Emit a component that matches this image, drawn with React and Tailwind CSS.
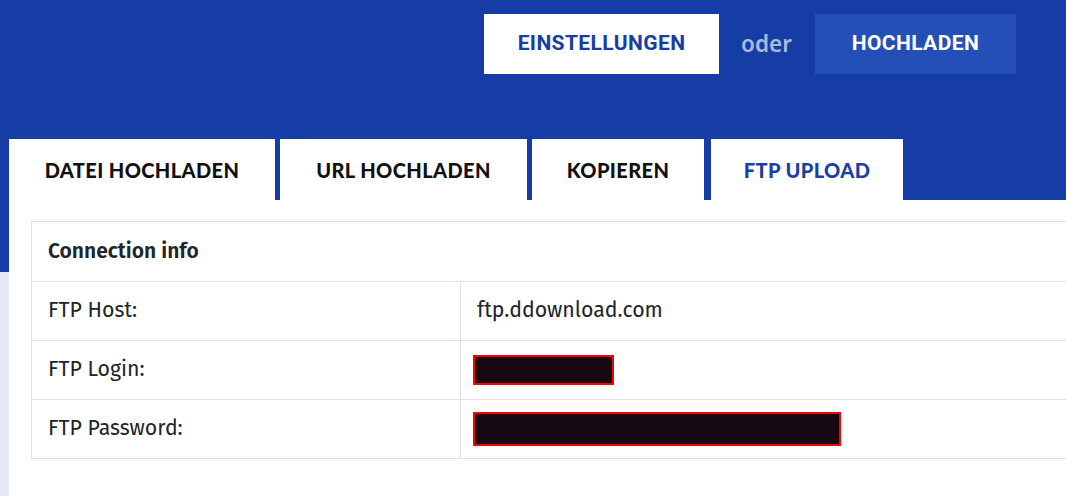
import React from "react";

const TABS = [
  { label: "DATEI HOCHLADEN", w: "w-[266px]" },
  { label: "URL HOCHLADEN", w: "w-[247px]" },
  { label: "KOPIEREN", w: "w-[172px]" },
  { label: "FTP UPLOAD", w: "w-[192px]", active: true },
];

const ROWS = [
  { label: "FTP Host:", value: "ftp.ddownload.com" },
  { label: "FTP Login:", redact: "w-[141px] h-[30px]" },
  { label: "FTP Password:", redact: "w-[368px] h-[34px]" },
];

export default function App() {
  return (
    <div className="w-[1066px] h-[496px] overflow-hidden bg-[linear-gradient(#163da6_0_272px,#e4e9f5_272px)]">
      {/* Top buttons */}
      <div className="h-[139px] pt-[14px] flex items-start">
        <div className="ml-[484px] flex items-center">
          <button className="w-[235px] h-[60px] bg-white text-[#163da6] text-[21px] font-bold tracking-[0.4px] [font-family:Roboto,sans-serif]">
            EINSTELLUNGEN
          </button>
          <span className="ml-[22px] mr-[23px] text-[22.5px] font-semibold text-[#aab8dc] [font-family:'Noto_Sans',sans-serif]">oder</span>
          <button className="w-[201px] h-[60px] bg-[#244fb6] text-white text-[21px] font-bold tracking-[0.4px] [font-family:Roboto,sans-serif]">
            HOCHLADEN
          </button>
        </div>
      </div>

      <div className="pl-[9px]">
        {/* Tabs */}
        <div className="flex h-[61px] gap-[5px]">
          {TABS.map((t, i) => (
            <div
              key={t.label}
              className={`${t.w} ${i === 3 ? "ml-[2px]" : ""} h-full bg-white flex items-center justify-center text-[20px] font-black tracking-[0.4px] [font-family:Lato,sans-serif] ${t.active ? "text-[#1a3fa6]" : "text-[#111]"}`}
            >
              {t.label}
            </div>
          ))}
        </div>

        {/* Panel */}
        <div className="bg-white h-[296px] pl-[22px] pt-[21px]">
          <div className="w-[1080px] border border-[#dee2e6] text-[#212529] [font-family:'Fira_Sans','Noto_Sans',sans-serif]">
            <div className="h-[60px] flex items-center pl-[16px] text-[21px] font-semibold border-b border-[#dee2e6]">
              Connection info
            </div>
            {ROWS.map((r, i) => (
              <div key={r.label} className={`flex ${i < ROWS.length - 1 ? "h-[59px] border-b border-[#dee2e6]" : "h-[58px]"}`}>
                <div className="w-[429px] border-r border-[#dee2e6] flex items-center pl-[16px] text-[21.3px]">
                  {r.label}
                </div>
                <div className="flex-1 flex items-center pl-[12px] text-[21.3px]">
                  {r.value ? (
                    <span className="pl-[4px]">{r.value}</span>
                  ) : (
                    <div className={`${r.redact} bg-[#170a14] border-2 border-[#ff0000]`} />
                  )}
                </div>
              </div>
            ))}
          </div>
        </div>
      </div>
    </div>
  );
}
